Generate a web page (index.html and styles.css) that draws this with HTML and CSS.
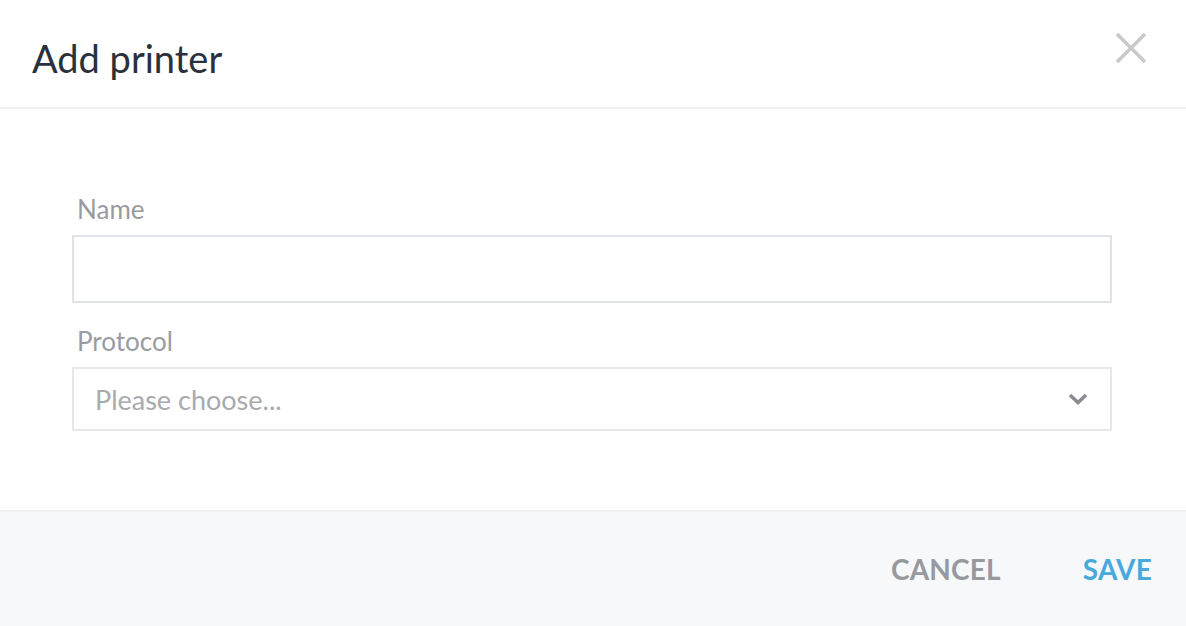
FILE: index.html
```html
<!DOCTYPE html>
<html lang="en">
<head>
    <meta charset="UTF-8">
    <meta name="viewport" content="width=device-width, initial-scale=1.0">
    <title>Add printer</title>
    <link rel="stylesheet" href="styles.css">
</head>
<body>

<div class="modal">
    <div class="modal-header">
        <h1>Add printer</h1>
        <button class="close" aria-label="Close">
            <svg width="32" height="32" viewBox="0 0 32 32"><path d="M2 2 L30 30 M30 2 L2 30" stroke="#c9c9c9" stroke-width="3.5" fill="none"/></svg>
        </button>
    </div>

    <div class="modal-body">
        <label class="field-label" for="name">Name</label>
        <input class="field-input" id="name" type="text">

        <label class="field-label" for="protocol">Protocol</label>
        <div class="select">
            <span class="placeholder">Please choose...</span>
            <svg width="20" height="12" viewBox="0 0 20 12"><path d="M2 2 L10 9.5 L18 2" stroke="#8b8c91" stroke-width="3.5" fill="none"/></svg>
        </div>
    </div>

    <div class="modal-footer">
        <button class="btn btn-cancel">CANCEL</button>
        <button class="btn btn-save">SAVE</button>
    </div>
</div>

</body>
</html>
```

FILE: styles.css
```css
body {
    margin: 0;
    font-family: "Lato", "Noto Sans", sans-serif;
    background: #fff;
}
.modal {
    width: 1186px;
    height: 626px;
    display: flex;
    flex-direction: column;
}
.modal-header {
    height: 107px;
    border-bottom: 2px solid #f1f1f3;
    display: flex;
    align-items: center;
    justify-content: space-between;
    padding: 0 39px 0 32px;
}
.modal-header h1 {
    margin: 0;
    font-size: 38px;
    font-weight: 400;
    color: #2a313b;
    padding-top: 8px;
}
.close {
    border: none;
    background: none;
    padding: 0;
    margin-bottom: 9px;
    cursor: pointer;
}
.modal-body {
    flex: 1;
    padding: 84px 74px 0 72px;
}
.field-label {
    display: block;
    font-size: 26px;
    color: #9a9ba0;
    padding-left: 5px;
    margin-bottom: 10px;
}
.field-input {
    display: block;
    box-sizing: border-box;
    width: 100%;
    height: 68px;
    border: 2px solid #dfe2e6;
    margin: 0 0 22px;
}
.select {
    box-sizing: border-box;
    height: 64px;
    border: 2px solid #e7e7e9;
    display: flex;
    align-items: center;
    justify-content: space-between;
    padding: 0 22px 0 21px;
}
.placeholder {
    font-size: 27px;
    color: #a9aaae;
}
.modal-footer {
    height: 114px;
    background: #f7f8fa;
    border-top: 2px solid #f0f1f3;
    display: flex;
    align-items: center;
    justify-content: flex-end;
    padding-right: 34px;
    gap: 82px;
}
.btn {
    border: none;
    background: none;
    padding: 0;
    font-family: inherit;
    font-size: 28px;
    font-weight: 700;
    letter-spacing: 0.2px;
    cursor: pointer;
}
.btn-cancel {
    color: #98999e;
}
.btn-save {
    color: #4aa9dc;
}
```
